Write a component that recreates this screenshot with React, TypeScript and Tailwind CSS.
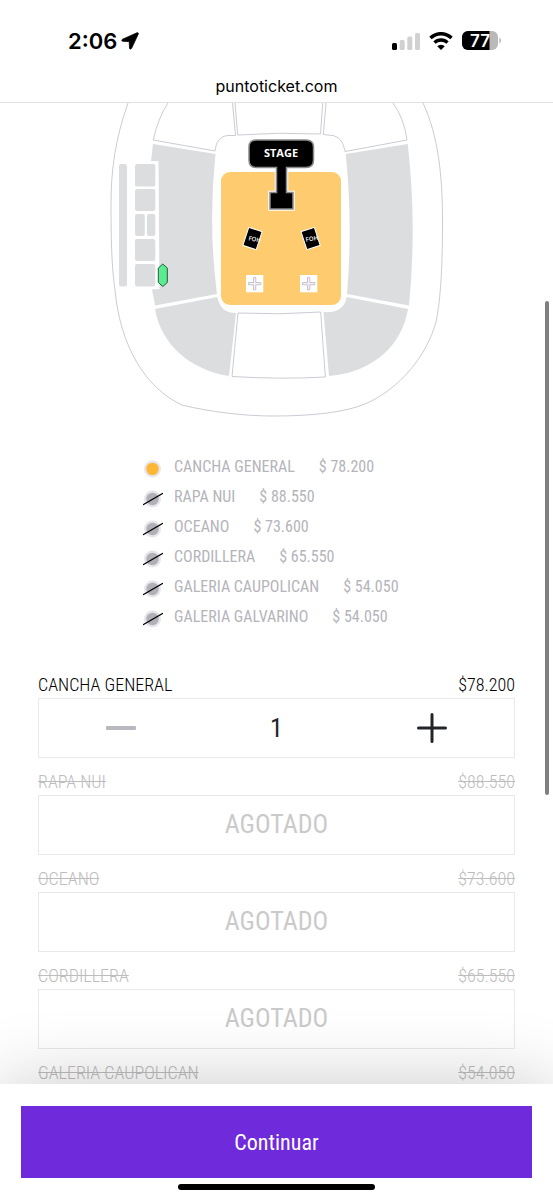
import { useState } from "react";
import type { ReactNode } from "react";

type Sector = { name: string; price: string; available: boolean };

const sectors: Sector[] = [
  { name: "CANCHA GENERAL", price: "78.200", available: true },
  { name: "RAPA NUI", price: "88.550", available: false },
  { name: "OCEANO", price: "73.600", available: false },
  { name: "CORDILLERA", price: "65.550", available: false },
  { name: "GALERIA CAUPOLICAN", price: "54.050", available: false },
  { name: "GALERIA GALVARINO", price: "54.050", available: false },
];

function StatusBar() {
  return (
    <div className="flex h-[72px] items-center justify-between pt-[9px] pr-[51px] pl-[68px]">
      <div className="flex items-center gap-1">
        <span className="font-['Inter',sans-serif] text-[22px] leading-6 font-semibold">2:06</span>
        <svg className="h-[18px] w-[18px]" viewBox="0 0 18 18" aria-hidden="true">
          <path
            d="M16 .8 1.600 7.200C.4 7.800.6 9.300 1.900 9.300l6.300.3.3 6.400c0 1.300 1.500 1.500 2.100.3L17.200 2.200C17.700 1.200 17 .4 16 .8Z"
            fill="#000"
            stroke="#000"
            strokeWidth="0.800"
          />
        </svg>
      </div>
      <div className="flex items-center gap-[9px]">
        <svg className="h-[18px] w-[28px]" viewBox="0 0 28 18" aria-hidden="true">
          <rect x="0" y="11" width="5" height="7" rx="1.500" fill="#000" />
          <rect x="7.700" y="8" width="5" height="10" rx="1.500" fill="#d1d1d1" />
          <rect x="15.300" y="4.500" width="5" height="13.500" rx="1.500" fill="#d1d1d1" />
          <rect x="23" y="1" width="5" height="17" rx="1.500" fill="#d1d1d1" />
        </svg>
        <svg className="h-[18px] w-[24px]" viewBox="0 0 24 18" aria-hidden="true">
          <path d="M1.500 6a15 15 0 0 1 21 0" fill="none" stroke="#000" strokeWidth="3.500" />
          <path d="M5.500 10.700a9.200 9.200 0 0 1 13 0" fill="none" stroke="#000" strokeWidth="3.300" />
          <path d="M12 18 8.200 14.200a5.500 5.500 0 0 1 7.600 0Z" fill="#000" />
        </svg>
        <svg className="h-[19px] w-[40px]" viewBox="0 0 40 19" role="img" aria-label="Batería 77">
          <clipPath id="battery">
            <rect x="0" y="0" width="36" height="19" rx="6" />
          </clipPath>
          <g clipPath="url(#battery)">
            <rect width="36" height="19" fill="#b9b9b9" />
            <rect width="27.500" height="19" fill="#000" />
          </g>
          <path d="M37.300 6.500c2.300.9 2.300 5.100 0 6Z" fill="#b9b9b9" />
          <text
            x="18"
            y="15.700"
            textAnchor="middle"
            className="fill-white font-['Inter',sans-serif] text-[17px] font-semibold"
          >
            77
          </text>
        </svg>
      </div>
    </div>
  );
}

function VenueMap() {
  return (
    <svg className="block w-full" viewBox="0 103 553 315" role="img" aria-label="Mapa del recinto">
      <g fill="none" stroke="#bfbdc9" strokeWidth="0.800">
        <path d="M128 103C115 140 111 170 111 205C111 245 112 270 115 290C120 345 145 388 182 405C210 412 245 416 272 416C315 416 345 412 365 404C400 389 427 355 436 322C441 297 442.500 265 442.500 220C442.500 175 438 135 423 103" />
        <path d="M168 103Q158 118 153.300 140L215 151C216 142 220 136 228 135.500L235.500 135.500L232.500 103" />
        <path d="M235 103L237.700 135Q280 132 320.500 134L322.700 103" />
        <path d="M326 103L323.300 134.500L333 135.500C342 138 343.500 145 345 151.500L407 140Q404 118 393 103" />
        <path d="M238 313Q280 315 320.700 312L325.300 377Q280 379.500 232 376.500Z" />
      </g>
      <g fill="#dcdddf">
        <path d="M153 144L215.500 154Q208 224 217 294L155 305.500L152 289.500L159.500 289L158.500 161L151 161Z" />
        <path d="M155 309L217.300 297C220 308 225 313 236 313L229 376C191 370 161 345 155 309Z" />
        <path d="M345.700 154L407.700 144Q417 224 409 305.500L347 294Q353 224 345.700 154Z" />
        <path d="M346.700 297L408 309C402 345 374 372 329 376L323.500 312C337 313 345 308 346.700 297Z" />
        <rect x="119" y="164" width="8" height="122.500" rx="2" />
        <rect x="135" y="164" width="20.300" height="22.500" rx="2" />
        <rect x="135" y="189" width="20.300" height="22" rx="2" />
        <rect x="135" y="214" width="9.800" height="22" rx="2" />
        <rect x="147" y="214" width="8.300" height="22" rx="2" />
        <rect x="135" y="239" width="20.300" height="22" rx="2" />
        <rect x="135" y="264" width="20.300" height="22.500" rx="2" />
      </g>
      <path
        d="M162.800 264L167.300 268V282.500L162.800 286.500L158.300 282.500V268Z"
        fill="#5ceb91"
        stroke="#1f5c3a"
        strokeWidth="1"
      />
      <rect x="221" y="172" width="120" height="133" rx="9" fill="#fecb6e" />
      <path
        d="M256 140H306Q313.500 140 313.500 147V160Q313.500 167.500 306 167.500H286.500V192.500H293V209H270V192.500H276.500V167.500H256Q249 167.500 249 160V147Q249 140 256 140Z"
        stroke="#fff"
        strokeWidth="3.500"
      />
      <path
        d="M256 140H306Q313.500 140 313.500 147V160Q313.500 167.500 306 167.500H286.500V192.500H293V209H270V192.500H276.500V167.500H256Q249 167.500 249 160V147Q249 140 256 140Z"
        fill="#000"
        stroke="#8b8b8f"
        strokeWidth="1.500"
      />
      <text
        x="281"
        y="157"
        textAnchor="middle"
        className="fill-white font-['Open_Sans',sans-serif] text-[11px] font-bold"
      >
        STAGE
      </text>
      <g transform="translate(252.500 238.500)">
        <rect x="-7" y="-9.500" width="14" height="19" fill="#000" stroke="#fff" transform="rotate(18)" />
        <text
          x="-4"
          y="2.500"
          transform="rotate(10)"
          className="fill-white font-['Open_Sans',sans-serif] text-[6px] font-semibold"
        >
          FOH
        </text>
      </g>
      <g transform="translate(310.600 238.500)">
        <rect x="-7" y="-9.500" width="14" height="19" fill="#000" stroke="#fff" transform="rotate(-18)" />
        <text
          x="-5"
          y="2.500"
          transform="rotate(-10)"
          className="fill-white font-['Open_Sans',sans-serif] text-[6px] font-semibold"
        >
          FOH
        </text>
      </g>
      {[246, 300].map((x) => (
        <g key={x} transform={`translate(${x} 275)`}>
          <rect width="17.300" height="17.300" fill="#fff" />
          <path
            d="M7.500 2.500H9.800V7.500H14.800V9.800H9.800V14.800H7.500V9.800H2.500V7.500H7.500Z"
            fill="#f3f1f5"
            stroke="#bdb4c4"
            strokeWidth="0.800"
          />
        </g>
      ))}
    </svg>
  );
}

function LegendMark({ available }: { available: boolean }) {
  return (
    <svg className="mt-1 h-5 w-5 shrink-0" viewBox="0 0 20 20" aria-hidden="true">
      <circle cx="9.500" cy="10" r="8.500" fill="#e6e6ea" />
      <circle cx="9.500" cy="10" r="6.200" fill={available ? "#fdb735" : "#b1b0b7"} />
      {!available && <path d="M.5 15.500 19.500 4.500" stroke="#000" strokeWidth="1.400" strokeLinecap="round" />}
    </svg>
  );
}

function Legend() {
  return (
    <ul className="mx-auto mt-[34px] w-[267px]">
      {sectors.map((s) => (
        <li key={s.name} className="flex h-[30px] items-center text-[16px] whitespace-nowrap text-[#b5b4ba]">
          <LegendMark available={s.available} />
          <span className="ml-[11px]">{s.name}</span>
          <span className="ml-6">$ {s.price}</span>
        </li>
      ))}
    </ul>
  );
}

function Stepper() {
  const [count, setCount] = useState(1);
  return (
    <div className="grid h-[60px] grid-cols-[164px_1fr_164px] items-center border border-[#e9e9e9]">
      <button
        type="button"
        aria-label="Quitar"
        className="flex h-full items-center justify-center"
        onClick={() => setCount(Math.max(1, count - 1))}
      >
        <svg className="h-[30px] w-[30px]" viewBox="0 0 30 30" aria-hidden="true">
          <rect x="0" y="13" width="30" height="4" rx="1" fill="#b9b8c0" />
        </svg>
      </button>
      <output className="text-center text-[26px] leading-8 text-[#212529]">{count}</output>
      <button
        type="button"
        aria-label="Agregar"
        className="flex h-full items-center justify-center"
        onClick={() => setCount(count + 1)}
      >
        <svg className="h-[30px] w-[30px]" viewBox="0 0 30 30" aria-hidden="true">
          <path d="M1.500 15H28.500M15 1.500V28.500" stroke="#212529" strokeWidth="3" strokeLinecap="round" />
        </svg>
      </button>
    </div>
  );
}

function TicketRow({ sector, children }: { sector: Sector; children?: ReactNode }) {
  return (
    <li>
      <div
        className={
          sector.available
            ? "flex h-[37px] items-end justify-between pb-px text-[18px] leading-6 font-light text-[#000]"
            : "flex h-[37px] items-end justify-between pb-px text-[18px] leading-6 font-light text-[#bdbdbd] line-through"
        }
      >
        <span>{sector.name}</span>
        <span>${sector.price}</span>
      </div>
      {children}
    </li>
  );
}

function SoldOut() {
  return (
    <div className="flex h-[60px] items-center justify-center border border-[#e9e9e9] pb-[2px] text-[26px] text-[#cacaca]">
      AGOTADO
    </div>
  );
}

export default function App() {
  return (
    <div className="flex h-screen flex-col bg-white font-['Roboto_Condensed','Roboto',sans-serif]">
      <header className="shrink-0 border-b border-[#e2e2e2] text-black">
        <StatusBar />
        <div className="h-[30px] text-center font-['Inter',sans-serif] text-[16px] leading-7">puntoticket.com</div>
      </header>
      <main className="relative min-h-0 flex-1 overflow-x-hidden overflow-y-auto [scrollbar-width:none]">
        <VenueMap />
        <Legend />
        <ul className="mt-[29px] px-[38px]">
          <TicketRow sector={sectors[0]}>
            <Stepper />
          </TicketRow>
          {sectors.slice(1, 4).map((s) => (
            <TicketRow key={s.name} sector={s}>
              <SoldOut />
            </TicketRow>
          ))}
          <TicketRow sector={sectors[4]} />
        </ul>
        <div className="absolute top-[198px] right-1 h-[494px] w-1 rounded-full bg-[#808080]" />
      </main>
      <footer className="relative z-10 flex h-[116px] shrink-0 flex-col items-center bg-white px-[21px] pt-[22px] shadow-[0_0_72px_rgba(0,0,0,0.21)]">
        <button type="button" className="h-[72px] w-full bg-[#6f2adb] text-[22px] text-white">
          Continuar
        </button>
        <div className="mt-[6px] h-[6px] w-[197px] rounded-full bg-black" />
      </footer>
    </div>
  );
}
